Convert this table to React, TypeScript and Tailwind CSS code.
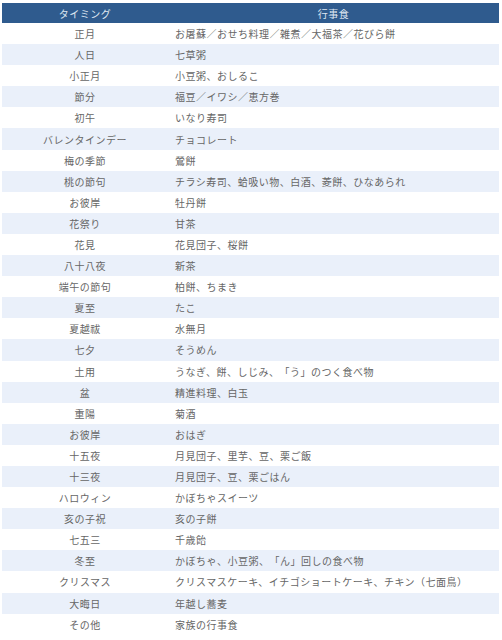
const rows: [string, string][] = [
  ["正月", "お屠蘇／おせち料理／雑煮／大福茶／花びら餅"],
  ["人日", "七草粥"],
  ["小正月", "小豆粥、おしるこ"],
  ["節分", "福豆／イワシ／恵方巻"],
  ["初午", "いなり寿司"],
  ["バレンタインデー", "チョコレート"],
  ["梅の季節", "鶯餅"],
  ["桃の節句", "チラシ寿司、蛤吸い物、白酒、菱餅、ひなあられ"],
  ["お彼岸", "牡丹餅"],
  ["花祭り", "甘茶"],
  ["花見", "花見団子、桜餅"],
  ["八十八夜", "新茶"],
  ["端午の節句", "柏餅、ちまき"],
  ["夏至", "たこ"],
  ["夏越祓", "水無月"],
  ["七夕", "そうめん"],
  ["土用", "うなぎ、餅、しじみ、「う」のつく食べ物"],
  ["盆", "精進料理、白玉"],
  ["重陽", "菊酒"],
  ["お彼岸", "おはぎ"],
  ["十五夜", "月見団子、里芋、豆、栗ご飯"],
  ["十三夜", "月見団子、豆、栗ごはん"],
  ["ハロウィン", "かぼちゃスイーツ"],
  ["亥の子祝", "亥の子餅"],
  ["七五三", "千歳飴"],
  ["冬至", "かぼちゃ、小豆粥、「ん」回しの食べ物"],
  ["クリスマス", "クリスマスケーキ、イチゴショートケーキ、チキン（七面鳥）"],
  ["大晦日", "年越し蕎麦"],
  ["その他", "家族の行事食"],
];

export default function App() {
  return (
    <div className="w-[502px] h-[640px] bg-white pt-[3px] pl-[2px] pr-[3px] font-['Noto_Sans_CJK_JP',sans-serif] text-[10px] tracking-[0.5px] text-[#666666] [text-spacing-trim:space-all]">
      <div className="grid grid-cols-[166px_1fr] h-[20px] items-center bg-[#2f5b8e] text-[#dfe7f2]">
        <div className="text-center">タイミング</div>
        <div className="text-center">行事食</div>
      </div>
      {rows.map(([when, food], i) => (
        <div
          key={i}
          className={
            i % 2 === 1
              ? "grid grid-cols-[166px_1fr] h-[21.1px] items-center bg-[#eaf0fa]"
              : "grid grid-cols-[166px_1fr] h-[21.1px] items-center bg-white"
          }
        >
          <div className="text-center">{when}</div>
          <div className="pl-[7px]">{food}</div>
        </div>
      ))}
    </div>
  );
}
